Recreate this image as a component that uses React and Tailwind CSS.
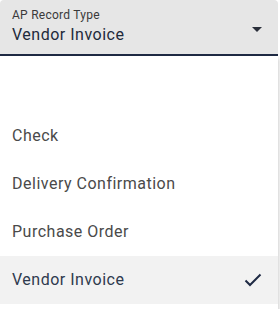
import React from "react";

export default function App() {
  const items = ["Check", "Delivery Confirmation", "Purchase Order", "Vendor Invoice"];
  return (
    <div className="w-[280px] h-[309px] bg-white overflow-hidden" style={{ fontFamily: "Roboto, 'Liberation Sans', sans-serif" }}>
      <div className="w-[278px] h-[56px] bg-[#e6e6e6] rounded-t border-b-2 border-[#1f2a44] flex items-start justify-between pl-3 pr-4 pt-[8px]">
        <div className="flex flex-col">
          <span className="text-[12px] leading-[14px] tracking-[0.25px] text-[#3a3a3a]">AP Record Type</span>
          <span className="text-[16px] leading-[20px] tracking-[0.5px] text-[#1e2a3b] mt-[3px]">Vendor Invoice</span>
        </div>
        <svg width="10" height="5" viewBox="0 0 10 5" className="mt-[19px]">
          <path d="M0 0 L10 0 L5 5 Z" fill="#2a2f3a" />
        </svg>
      </div>
      <div className="w-[278px] bg-white shadow-[1px_2px_4px_rgba(0,0,0,0.2)] pt-[8px] pb-2">
        <div className="h-[48px]" />
        {items.map((it) => {
          const sel = it === "Vendor Invoice";
          return (
            <div
              key={it}
              className={`h-[48px] flex items-center justify-between pl-3 pr-4 text-[16px] tracking-[0.5px] ${sel ? "bg-[#f2f2f2] text-[#2e3a4e]" : "text-[#4a4a4a]"}`}
            >
              <span>{it}</span>
              {sel && (
                <svg width="18" height="14" viewBox="0 0 18 14">
                  <path d="M1.5 7.5 L6 12 L16.5 1.5" fill="none" stroke="#1f2a44" strokeWidth="2" />
                </svg>
              )}
            </div>
          );
        })}
      </div>
    </div>
  );
}
